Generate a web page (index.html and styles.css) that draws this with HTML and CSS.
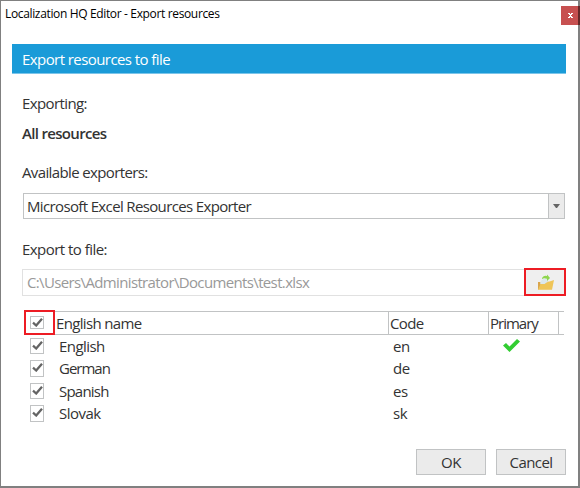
FILE: index.html
```html
<!DOCTYPE html>
<html lang="en">
<head>
<meta charset="utf-8">
<title>Localization HQ Editor - Export resources</title>
<link rel="stylesheet" href="styles.css">
</head>
<body>
<svg class="defs" width="0" height="0"><symbol id="tick" viewBox="0 0 11 9"><path d="M1 4.7 4.2 7.5 10 .8" fill="none" stroke="#646464" stroke-width="2.3"/></symbol></svg>
<div class="window">
  <header class="titlebar"><span class="title">Localization HQ Editor - Export resources</span><button class="close" aria-label="Close"><svg width="5" height="5" viewBox="0 0 5 5"><path d="M0 0h2v1h1V0h2v1H4v1H3v1h1v1h1v1H3V4H2v1H0V4h1V3h1V2H1V1H0z" fill="#fff"/></svg></button></header>
  <main class="content">
    <h1 class="banner"><span class="t-banner">Export resources to file</span></h1>
    <div class="label exporting"><span class="t-exporting">Exporting:</span></div>
    <div class="label scope"><span class="t-scope">All resources</span></div>
    <div class="label available"><span class="t-available">Available exporters:</span></div>
    <div class="combo"><span class="t-combo">Microsoft Excel Resources Exporter</span><span class="arrow"><svg width="7" height="4" viewBox="0 0 7 4"><path d="M0 0h7L4 4H3z" fill="#646464"/></svg></span></div>
    <div class="label file-label"><span class="t-file">Export to file:</span></div>
    <div class="file-row">
      <div class="path"><span class="t-path">C:\Users\Administrator\Documents\test.xlsx</span></div>
      <button class="browse" aria-label="Browse"><svg width="17" height="17" viewBox="0 0 17 17"><path d="M1 8h4l1-1 7 1v3l-8 1-4 4z" fill="#d9a54c"/><path d="M3 9q2-5 7-4l1 4-7 2z" fill="#dbe8ed"/><path d="M5 4Q7 .8 10 2V.6L13 4l-3 3V4.8Q7 3.5 5 5z" fill="#8fd64e"/><path d="M1 15.7 3.5 10H8l1.5-1.5L17 6l-2 9.7z" fill="#efc558"/></svg></button>
    </div>
    <div class="table">
      <div class="row head"><div class="mark"><span class="check"><svg><use href="#tick"/></svg></span></div><div class="cell name"><span class="t-name">English name</span></div><div class="cell"><span class="t-code">Code</span></div><div class="cell"><span class="t-primary">Primary</span></div><div class="cell"></div></div>
      <div class="row r1"><span class="check"><svg><use href="#tick"/></svg></span><span class="lang t-en">English</span><span class="code">en</span><svg class="primary" viewBox="0 0 17 13"><path d="M0 6.5 3 4l3.5 3.5L14 0l3 2.5L6.5 13z" fill="#32cd32"/></svg></div>
      <div class="row r2"><span class="check"><svg><use href="#tick"/></svg></span><span class="lang t-de">German</span><span class="code">de</span></div>
      <div class="row r3"><span class="check"><svg><use href="#tick"/></svg></span><span class="lang t-es">Spanish</span><span class="code">es</span></div>
      <div class="row r4"><span class="check"><svg><use href="#tick"/></svg></span><span class="lang t-sk">Slovak</span><span class="code">sk</span></div>
    </div>
    <footer class="actions"><button class="action"><span class="t-ok">OK</span></button><button class="action"><span class="t-cancel">Cancel</span></button></footer>
  </main>
</div>
</body>
</html>
```

FILE: styles.css
```css
* { box-sizing: border-box; }
body { margin: 0; width: 580px; height: 488px; overflow: hidden; background: #fff; }
.defs { position: absolute; }
.window { width: 580px; height: 488px; border: solid #808080; border-width: 1px 2px 2px 1px; font: 15px/20px "Open Sans", sans-serif; letter-spacing: -.5px; color: #333; }
button { padding: 0; font: inherit; letter-spacing: inherit; color: inherit; border-radius: 0; }
.titlebar { display: flex; justify-content: space-between; height: 43px; padding: 5px 0 0 4px; color: #000; font-size: 12px; line-height: 16px; }
.title { height: 18px; letter-spacing: -.35px; }
.close { width: 19px; height: 19px; margin-right: -2px; display: flex; align-items: center; padding-left: 7px; background: linear-gradient(to right, #c75050 17px, #642828 17px); border: 0; }
.content { padding-left: 11px; }
.banner { width: 554px; height: 30px; margin: 0; padding: 5px 0 0 10px; font: inherit; color: #fff; background: #1a9bd8; border-bottom: 1px solid #7bc5ea; }
.label { height: 20px; margin-left: 10px; }
.exporting { margin-top: 19px; }
.scope { margin-top: 10px; font-weight: 600; }
.available { margin-top: 19px; }
.combo { display: flex; justify-content: space-between; width: 542px; height: 26px; margin: 11px 0 0 11px; padding: 2px 0 0 3px; border: 1px solid #c1c3c4; }
.arrow { width: 16px; height: 24px; margin-top: -2px; display: flex; align-items: center; justify-content: center; background: #ebebeb; border-left: 1px solid #c1c3c4; }
.file-label { margin-top: 20px; }
.file-row { display: flex; height: 28px; width: 544px; margin: 9px 0 0 10px; }
.path { width: 502px; height: 27px; margin-top: 1px; padding: 2px 4px; border: 1px solid #e1e1e1; border-right: 0; color: #999; }
.browse { width: 42px; height: 28px; padding: 1px 0 0 1px; background: #efefef; border: 2px solid #ed1c24; display: flex; align-items: center; justify-content: center; }
.table { width: 540px; margin: 14px 0 0 12px; }
.row { display: grid; grid-template-columns: 29px 334px 100px 71px; height: 22px; padding-left: 6px; }
.head { grid-template-columns: 30px 334px 100px 70px 6px; height: 25px; padding: 0; }
.cell { height: 24px; margin-top: 1px; padding: 1px 0 0 1px; border: solid #c1c3c4; border-width: 1px 0 1px 1px; }
.cell.name { border-left: 0; margin-left: 1px; }
.mark { width: 31px; border: 2px solid #ed1c24; padding: 4px; }
.check { width: 14px; height: 16px; border: 1px solid #c1c3c4; display: block; }
.check svg { display: block; width: 11px; height: 9px; margin: 2px 0 2px 1px; }
.head .check { height: 13px; }
.head .check svg { margin-top: 1px; }
.r1, .r3 { height: 23px; }
.row > .check { margin-top: 3px; }
.r2 > .check, .r4 > .check { height: 17px; margin-top: 2px; }
.lang, .code { white-space: nowrap; }
.r1 > .lang, .r1 > .code, .r3 > .lang, .r3 > .code { padding-top: 1px; }
.primary { width: 17px; height: 13px; margin: 4px 0 0 10px; }
.actions { display: flex; gap: 10px; margin: 24px 0 0 404px; }
.action { width: 70px; height: 26px; background: #ebebeb; border: 1px solid #c1c3c4; }

/* Tracking tuned per text run */
.t-banner { letter-spacing: -.57px; }
.t-exporting { letter-spacing: -.61px; }
.t-scope { letter-spacing: -.68px; }
.t-available { letter-spacing: -.63px; }
.t-combo { letter-spacing: -.64px; }
.t-file { letter-spacing: -.54px; }
.t-path { letter-spacing: -.64px; }
.t-name { letter-spacing: -.65px; }
.t-code { letter-spacing: -.6px; }
.t-primary { letter-spacing: -1px; }
.t-en { letter-spacing: -.57px; }
.t-de { letter-spacing: -1px; }
.t-es { letter-spacing: -.77px; }
.t-cancel { letter-spacing: -.6px; }
```
